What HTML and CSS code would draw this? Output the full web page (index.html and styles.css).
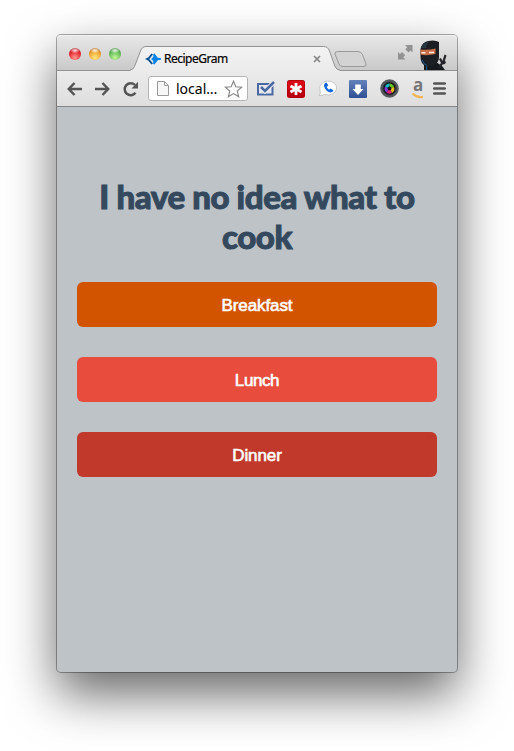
FILE: index.html
```html
<!DOCTYPE html>
<html lang="en">
<head>
<meta charset="utf-8">
<title>RecipeGram</title>
<link rel="stylesheet" href="styles.css">
</head>
<body>
<div class="window">
  <header class="tabstrip">
    <div class="lights">
      <span class="light red"></span><span class="light amber"></span><span class="light green"></span>
    </div>
    <div class="tab">
      <svg class="tab-shape" width="210" height="25" viewBox="0 0 210 25">
        <defs><linearGradient id="tabFill" x1="0" y1="0" x2="0" y2="1"><stop offset="0" stop-color="#f3f3f3"/><stop offset="1" stop-color="#ebebeb"/></linearGradient></defs>
        <path d="M0 24.5Q3 24 4.500 20.500L10.500 5Q12 .5 16 .5H193.500Q198 .5 199.500 5L205 20.500Q206.500 24 210 24.500V25H0Z" fill="url(#tabFill)"/>
        <path d="M0 24Q3 24 4.500 20.500L10.500 5Q12 .5 16 .5H193.500Q198 .5 199.500 5L205 20.500Q206.500 24 210 24" fill="none" stroke="#929292"/>
      </svg>
      <svg class="favicon" width="16" height="12" viewBox="0 0 16 12">
        <path d="M7.200 1 3.200 6 7.200 11" fill="none" stroke="#0b5396" stroke-width="2"/>
        <path d="M0 6 3 4.500V7.500Z" fill="#0b5396"/>
        <path d="M8.200 1 9.500 .5 12.800 4.800 16 5.300V6.700L12.800 7.200 9.500 11.500 8.200 11V8L6 6 8.200 4Z" fill="#0a84e8"/>
      </svg>
      <span class="tab-title">RecipeGram</span>
      <svg class="close" width="8" height="8" viewBox="0 0 8 8"><path d="M1 1 7 7M7 1 1 7" stroke="#858585" stroke-width="1.700"/></svg>
    </div>
    <svg class="newtab" width="33" height="16" viewBox="0 0 33 16">
      <path d="M3.500 .5H24Q27 .5 28.500 3.500L32 13Q32.500 15.500 30 15.500H9Q6 15.500 5 13L1 3Q.5 .5 3.500 .5Z" fill="#d3d3d3" stroke="#999"/>
    </svg>
    <svg class="expand" width="15" height="15" viewBox="0 0 15 15" fill="#929292">
      <path d="M7 0H14.500V7.500L12.500 5.500 10.500 7.500 7.300 4.300 9.300 2.300ZM7.500 14.500H0V7L2 9 4 7 7.200 10.200 5.200 12.200Z"/>
    </svg>
    <svg class="avatar" width="29" height="30" viewBox="0 0 29 30">
      <path d="M5 25 17 22 23 26 26 30H5Z" fill="#15191d"/>
      <path d="M20 19 22 18 23.500 21 25.500 14.500 27.500 15.500 25.800 21 27 22 26 24 23.500 24.500 21.500 28 19 27 22 23Z" fill="#22242a"/>
      <path d="M1.500 9Q3 2 9 1Q16 -.5 20 2V17Q20 23 14 26H7Q1.500 24 1.500 17Z" fill="#1b1e22"/>
      <path d="M2 8Q4 2 11 1.200L8 4 7 8Z" fill="#263744"/>
      <path d="M1.500 9.500Q9 10.500 16.500 8.500V14Q8 16 1.500 14.500Z" fill="#c86e48"/>
      <path d="M2.500 12H6.500V13.500H2.500ZM10 11.800H15V13.200H10Z" fill="#fff1df"/>
      <path d="M8 26Q7 28 8 30M3 20Q4 24 8 25.500" stroke="#1b5d91" fill="none"/>
    </svg>
  </header>
  <nav class="toolbar">
    <svg class="i-back" width="15" height="14" viewBox="0 0 15 14" fill="none" stroke="#555" stroke-width="2.500"><path d="M7.500 1 1.800 7 7.500 13M2 7H15"/></svg>
    <svg class="i-forward" width="15" height="14" viewBox="0 0 15 14" fill="none" stroke="#555" stroke-width="2.500"><path d="M7.500 1 13.200 7 7.500 13M13 7H0"/></svg>
    <svg class="i-reload" width="16" height="16" viewBox="0 0 16 16"><path d="M12.500 11.800A6 6 0 1 1 12 4" fill="none" stroke="#555" stroke-width="2.500"/><path d="M15 .8V7.500H8.500Z" fill="#555"/></svg>
    <div class="omnibox">
      <svg class="i-page" width="12" height="15" viewBox="0 0 12 15"><path d="M.5 .5H7.500L11.500 4.500V14.500H.5Z" fill="#f7f7f7" stroke="#999"/><path d="M7.500 .5V4.500H11.500" fill="none" stroke="#999"/></svg>
      <span class="url">local…</span>
      <svg class="i-star" width="19" height="18" viewBox="0 0 19 18"><path d="M9.500 1.200 11.800 6.700 17.800 7.100 13.200 11 14.700 16.800 9.500 13.600 4.300 16.800 5.800 11 1.200 7.100 7.200 6.700Z" fill="#fff" stroke="#858585" stroke-width="1.100"/></svg>
    </div>
    <svg class="i-check" width="18" height="15" viewBox="0 0 18 15"><path d="M1 3H15.500V13.500H1Z" fill="#e2e6ed" stroke="#4a69a3" stroke-width="2"/><path d="M4 6 8 10 17 1" fill="none" stroke="#ededed" stroke-width="4.500"/><path d="M4 6 8 10 17 1" fill="none" stroke="#4a69a3" stroke-width="2.500"/></svg>
    <svg class="i-pass" width="18" height="18" viewBox="0 0 18 18"><rect width="18" height="18" rx="2.500" fill="#b9000d"/><rect x="1" y="1" width="16" height="9" rx="2" fill="#d90818"/><path d="M9 3V15M3.500 6 14.500 12M14.500 6 3.500 12" stroke="#fff" stroke-width="2.800"/></svg>
    <svg class="i-phone" width="20" height="17" viewBox="0 0 20 17"><path d="M1 15.500Q3 13.500 2 10A8.500 7 0 1 1 7 14.500Q4 16 1 15.500Z" fill="#fff" stroke="#c7c7c7"/><path d="M7.200 3Q5 5 7 8.500T12.500 12.500Q14.500 12.500 15.500 10.500L12.500 8.500 11 9.800Q9.500 8.500 8.800 6.700L10.200 5.500 8.800 2.800Z" fill="#1267dd"/></svg>
    <svg class="i-down" width="18" height="18" viewBox="0 0 18 18"><defs><linearGradient id="blue" x1="0" y1="0" x2="0" y2="1"><stop offset="0" stop-color="#6482ba"/><stop offset="1" stop-color="#2f4f95"/></linearGradient></defs><rect width="18" height="18" rx="1" fill="url(#blue)"/><path d="M6.200 4.500H11.800V9H14.500L9 15 3.500 9H6.200Z" fill="#fff"/></svg>
    <svg class="i-camera" width="19" height="19" viewBox="0 0 19 19"><circle cx="9.500" cy="9.500" r="9.300" fill="#555a5e"/><circle cx="9.500" cy="9.500" r="6.500" fill="#101214" stroke="#34383b"/><path d="M9.500 9.500V4.500A5 5 0 0 1 14 8Z" fill="#6bc521"/><path d="M9.500 9.500 14 8A5 5 0 0 1 12 14Z" fill="#eabf12"/><path d="M9.500 9.500 12 14A5 5 0 0 1 6.500 13.500Z" fill="#e5217d"/><path d="M9.500 9.500 6.500 13.500A5 5 0 0 1 5 7.500Z" fill="#813ad2"/><path d="M9.500 9.500 5 7.500A5 5 0 0 1 9.500 4.500Z" fill="#10bfc7"/><circle cx="9.500" cy="9.500" r="1.900" fill="#10151a"/></svg>
    <div class="amazon"><span>a</span><svg width="11" height="7" viewBox="0 0 11 7"><path d="M.5 1.500Q5 6 11 4.800" fill="none" stroke="#f2b553" stroke-width="2.200"/></svg></div>
    <svg class="i-menu" width="13" height="13" viewBox="0 0 13 13"><path d="M1.200 1.500H11.800M1.200 6.500H11.800M1.200 11.500H11.800" stroke="#555" stroke-width="2.600" stroke-linecap="round"/></svg>
  </nav>
  <main class="page">
    <h1>I have no idea what to cook</h1>
    <a class="btn breakfast">Breakfast</a>
    <a class="btn lunch">Lunch</a>
    <a class="btn dinner">Dinner</a>
  </main>
</div>
</body>
</html>
```

FILE: styles.css
```css
* { box-sizing: border-box; }
body { margin: 0; height: 751px; padding: 35px 57px; background: #fff; overflow: hidden; }
svg { display: block; flex: none; }
.window {
  width: 400px; height: 637px; border-radius: 4px;
  background: #bdc3c7;
  box-shadow: 0 0 0 1px rgba(0,0,0,.32), 0 22px 50px rgba(0,0,0,.6);
}
.tabstrip {
  height: 36px; display: flex; align-items: flex-start;
  border-radius: 4px 4px 0 0; border-bottom: 1px solid #929292;
  background: linear-gradient(#e8e8e8, #c9c9c9);
  box-shadow: inset 0 1px #f1f1f1;
}
.lights { display: flex; gap: 8px; margin: 13px 0 0 12px; }
.light { width: 12px; height: 12px; border-radius: 50%; }
.red { background: radial-gradient(ellipse 5px 3px at 50% 20%, rgba(255,255,255,.9), transparent), radial-gradient(circle at 50% 80%, #ff9a91, #e62731 55%, #8d1719); }
.amber { background: radial-gradient(ellipse 5px 3px at 50% 20%, rgba(255,255,255,.9), transparent), radial-gradient(circle at 50% 80%, #ffea83, #efa32c 55%, #925417); }
.green { background: radial-gradient(ellipse 5px 3px at 50% 20%, rgba(255,255,255,.9), transparent), radial-gradient(circle at 50% 80%, #c4f799, #66bd59 55%, #2a7430); }
.tab { position: relative; width: 210px; height: 25px; margin: 11px 0 0 9px; padding: 0 19px 0 15px; display: flex; align-items: center; }
.tab-shape { position: absolute; left: 0; top: 0; }
.favicon, .tab-title, .close { position: relative; }
.tab-title { margin-left: 3px; padding-top: 1px; font: 12px/16px "Noto Sans", sans-serif; color: #000; letter-spacing: -.5px; -webkit-text-stroke: .2px #000; }
.close { margin-left: auto; }
.newtab { margin: 16px 0 0 -6px; }
.expand { margin: 10px 0 0 31px; }
.avatar { margin: 5px 0 0 6px; }
.toolbar {
  height: 36px; display: flex; align-items: center; padding-left: 10px;
  background: linear-gradient(#ebebeb, #dedede); border-bottom: 1px solid #858585;
}
.i-forward { margin-left: 13px; }
.i-reload { margin-left: 13px; }
.omnibox { width: 100px; height: 25px; margin-left: 9px; padding: 0 4px 0 8px; display: flex; align-items: center; background: #fff; border: 1px solid #b4b4b4; border-radius: 3px; }
.url { margin-left: 7px; font: 14px/20px "Noto Sans", sans-serif; color: #000; letter-spacing: 0; }
.i-star { margin-left: auto; }
.i-check { margin-left: 9px; }
.i-pass { margin-left: 12px; }
.i-phone { margin-left: 13px; }
.i-down { margin-left: 11px; }
.i-camera { margin-left: 13px; }
.amazon { width: 11px; height: 20px; margin-left: 13px; }
.amazon span { display: block; height: 13px; padding-left: 1px; font: bold 17px/12px "Open Sans", sans-serif; color: #777; }
.i-menu { margin-left: 10px; }
.page { padding: 69px 20px 0; }
h1 { margin: 0 0 26px; text-align: center; font: 900 33px/40px Lato, sans-serif; letter-spacing: -.4px; color: #34495e; -webkit-text-stroke: 1px #34495e; }
.btn { display: flex; align-items: center; justify-content: center; height: 45px; margin-bottom: 30px; padding-top: 2px; border-radius: 6px; color: #fff; font: 17px/24px "Liberation Sans", sans-serif; letter-spacing: -.1px; -webkit-text-stroke: .6px #fff; }
.breakfast { background: #d35400; }
.lunch { background: #e74c3c; letter-spacing: -.4px; }
.dinner { background: #c0392b; }
```
